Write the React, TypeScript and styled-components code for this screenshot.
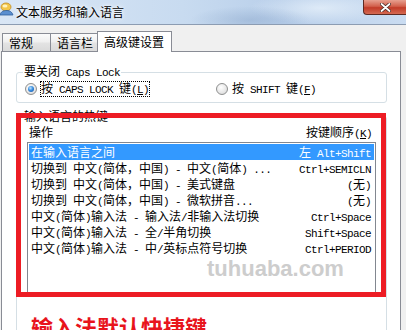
import React from 'react';
import styled, { createGlobalStyle, css } from 'styled-components';

const GlobalStyle = createGlobalStyle`
  html, body {
    margin: 0;
    padding: 0;
    background: #f0f0f0;
  }
  body {
    font-family: "Noto Sans CJK SC", "Liberation Sans", sans-serif;
    font-size: 12px;
    color: #000;
  }
`;

const Window = styled.div`
    position: relative;
    width: 406px;
    height: 330px;
    overflow: hidden;
    background: #f0f0f0;
`

const TitleBar = styled.div`
    height: 24px;
    display: flex;
    align-items: flex-start;
    border-bottom: 1px solid #8c9cb2;
    background:
        radial-gradient(ellipse 60px 14px at 250px 20px, rgba(120, 150, 190, 0.35), transparent),
        radial-gradient(ellipse 70px 16px at 320px 8px, rgba(235, 244, 252, 0.7), transparent),
        linear-gradient(to right, #d9e6f5 0%, #c8dbf0 45%, #b9cfea 70%, #cadcf1 100%);
`

const TitleIcon = styled.svg`
    flex: none;
    margin-top: 2px;
`

const TitleText = styled.span`
    margin-left: 2px;
    line-height: 24px;
    font-size: 12px;
    color: #000;
    text-shadow: 0 0 6px #fff, 0 0 3px #fff;
`

const CloseButton = styled.div`
    margin-left: auto;
    width: 43px;
    height: 15px;
    box-sizing: border-box;
    border: 1px solid #5e2a22;
    border-top: none;
    border-right: none;
    border-bottom-left-radius: 4px;
    background: linear-gradient(to bottom, #e7a090 0%, #d2604c 45%, #c23b28 55%, #d46a52 100%);
    display: flex;
    align-items: center;
    justify-content: center;
`

const Body = styled.div`
    padding: 6px 5px 0 1px;
`

const TabStrip = styled.div`
    display: flex;
    align-items: flex-end;
    height: 20px;
    padding-left: 1px;
    position: relative;
    z-index: 1;
`

const Tab = styled.div<{ $w: number; $active?: boolean }>`
    width: ${p => p.$w}px;
    height: 18px;
    box-sizing: border-box;
    padding-left: 6px;
    line-height: 17px;
    border: 1px solid #898c95;
    border-bottom: none;
    border-right: none;
    background: linear-gradient(to bottom, #fbfbfb 0%, #f0f0f0 45%, #e3e3e3 55%, #dadada 100%);
    white-space: nowrap;
    &:last-child {
        border-right: 1px solid #898c95;
    }
    ${p => p.$active && css`
        height: 21px;
        margin-bottom: -1px;
        border-right: 1px solid #898c95;
        background: #fff;
        line-height: 19px;
    `}
`

const Panel = styled.div`
    height: 400px;
    box-sizing: border-box;
    border: 1px solid #898c95;
    background: #fff;
    padding-top: 12px;
`

const GroupBox = styled.fieldset<{ $pb?: number }>`
    margin: 0 13px 0 14px;
    padding: 1px 8px ${p => p.$pb ?? 5}px 8px;
    border: 1px solid #d5dfe5;
    border-radius: 3px;
    & + & {
        margin-top: 6px;
    }
`

const Legend = styled.legend`
    margin-left: -2px;
    padding: 0 1px;
    line-height: 14px;
`

const RadioRow = styled.div`
    display: flex;
    height: 16px;
    align-items: center;
`

const Option = styled.label<{ $w?: number }>`
    display: flex;
    align-items: center;
    ${p => p.$w && css`width: ${p.$w}px;`}
`

const Radio = styled.span<{ $checked?: boolean }>`
    position: relative;
    flex: none;
    width: 12px;
    height: 12px;
    box-sizing: border-box;
    border-radius: 50%;
    border: 1px solid #8e8f8f;
    background: radial-gradient(circle at 40% 35%, #ffffff 0%, #e6e6e6 60%, #cfcfcf 100%);
    ${p => p.$checked && css`
        &::after {
            content: '';
            position: absolute;
            inset: 2px;
            border-radius: 50%;
            background: radial-gradient(circle at 40% 35%, #bfe6ff 0%, #3a8ee0 45%, #0d4b9c 100%);
        }
    `}
`

const OptionText = styled.span<{ $focus?: boolean }>`
    margin-left: 3px;
    line-height: 12px;
    border: 1px dotted ${p => (p.$focus ? '#000' : 'transparent')};
    white-space: nowrap;
`

const Lat = styled.span`
    font-family: "Liberation Mono", "DejaVu Sans Mono", monospace;
    font-size: 11px;
    letter-spacing: -0.6px;
    white-space: pre;
`

const Acc = styled.span`
    text-decoration: underline;
`

const Header = styled.div`
    display: flex;
    justify-content: space-between;
    height: 16px;
    line-height: 16px;
    margin: 0 6px 0 4px;
    white-space: nowrap;
`

const ListBox = styled.div`
    margin: 2px 2px 0 2px;
    height: 155px;
    box-sizing: border-box;
    border: 1px solid #828790;
    padding: 1px;
`

const Row = styled.div<{ $selected?: boolean }>`
    display: flex;
    justify-content: space-between;
    height: 16px;
    line-height: 16px;
    padding: 0 3px 0 2px;
    white-space: nowrap;
    ${p => p.$selected && css`
        background: #3399ff;
        color: #fff;
    `}
`

const RedFrame = styled.div`
    position: absolute;
    left: 16px;
    top: 113px;
    width: 370px;
    height: 184px;
    box-sizing: border-box;
    border: 5px solid #ed1c24;
    pointer-events: none;
`

const Watermark = styled.div`
    position: absolute;
    left: 207px;
    top: 258px;
    font-family: "Liberation Sans", Arial, sans-serif;
    font-weight: bold;
    font-size: 22px;
    line-height: 22px;
    color: #cdcdcd;
`

const Caption = styled.div`
    position: absolute;
    left: 31px;
    top: 315px;
    font-family: "Noto Sans CJK SC", sans-serif;
    font-weight: bold;
    font-size: 22px;
    line-height: 22px;
    color: #e8141c;
    white-space: nowrap;
`

const Mixed: React.FC<{ text: string }> = ({ text }) => (
    <>
        {text.split(/([\x00-\xff]+)/).map((part, i) =>
            part ? (i % 2 ? <Lat key={i}>{part}</Lat> : <span key={i}>{part}</span>) : null
        )}
    </>
)

const shortcuts: [string, string][] = [
    ['在输入语言之间', '左 Alt+Shift'],
    ['切换到 中文(简体，中国) - 中文(简体) ...', 'Ctrl+SEMICLN'],
    ['切换到 中文(简体，中国) - 美式键盘', '(无)'],
    ['切换到 中文(简体，中国) - 微软拼音...', '(无)'],
    ['中文(简体)输入法 - 输入法/非输入法切换', 'Ctrl+Space'],
    ['中文(简体)输入法 - 全/半角切换', 'Shift+Space'],
    ['中文(简体)输入法 - 中/英标点符号切换', 'Ctrl+PERIOD'],
]

const App: React.FC = () => {
    return (
        <>
            <GlobalStyle />
            <Window>
                <TitleBar>
                    <TitleIcon width="14" height="14" viewBox="0 0 14 14">
                        <ellipse cx="6" cy="5" rx="5" ry="4" fill="#f3c64a" stroke="#c08a20" strokeWidth="0.8" />
                        <ellipse cx="5" cy="4" rx="2.5" ry="1.6" fill="#fff3c0" />
                        <path d="M0 13 C1 9 4 8.5 7 8.5 C10 8.5 12 10 13 13 Z" fill="#5b8fd0" stroke="#2f5f9e" strokeWidth="0.8" />
                    </TitleIcon>
                    <TitleText>文本服务和输入语言</TitleText>
                    <CloseButton>
                        <svg width="11" height="9" viewBox="0 0 11 9">
                            <path d="M1.5 1 L9.5 8 M9.5 1 L1.5 8" stroke="#4a2a26" strokeWidth="3.4" strokeLinecap="round" />
                            <path d="M1.5 1 L9.5 8 M9.5 1 L1.5 8" stroke="#ffffff" strokeWidth="1.8" strokeLinecap="round" />
                        </svg>
                    </CloseButton>
                </TitleBar>
                <Body>
                    <TabStrip>
                        <Tab $w={48}>常规</Tab>
                        <Tab $w={47}>语言栏</Tab>
                        <Tab $w={75} $active>高级键设置</Tab>
                    </TabStrip>
                    <Panel>
                        <GroupBox>
                            <Legend><Mixed text="要关闭 Caps Lock" /></Legend>
                            <RadioRow>
                                <Option $w={191}>
                                    <Radio $checked />
                                    <OptionText $focus>
                                        <Mixed text="按 CAPS LOCK 键" /><Lat>(<Acc>L</Acc>)</Lat>
                                    </OptionText>
                                </Option>
                                <Option>
                                    <Radio />
                                    <OptionText>
                                        <Mixed text="按 SHIFT 键" /><Lat>(<Acc>F</Acc>)</Lat>
                                    </OptionText>
                                </Option>
                            </RadioRow>
                        </GroupBox>
                        <GroupBox $pb={60}>
                            <Legend>输入语言的热键</Legend>
                            <Header>
                                <span>操作</span>
                                <span>按键顺序<Lat>(<Acc>K</Acc>)</Lat></span>
                            </Header>
                            <ListBox>
                                {shortcuts.map(([action, keys], i) => (
                                    <Row key={i} $selected={i === 0}>
                                        <span><Mixed text={action} /></span>
                                        <span><Mixed text={keys} /></span>
                                    </Row>
                                ))}
                            </ListBox>
                        </GroupBox>
                    </Panel>
                </Body>
                <RedFrame />
                <Watermark>tuhuaba.com</Watermark>
                <Caption>输入法默认快捷键</Caption>
            </Window>
        </>
    )
}

export default App;
